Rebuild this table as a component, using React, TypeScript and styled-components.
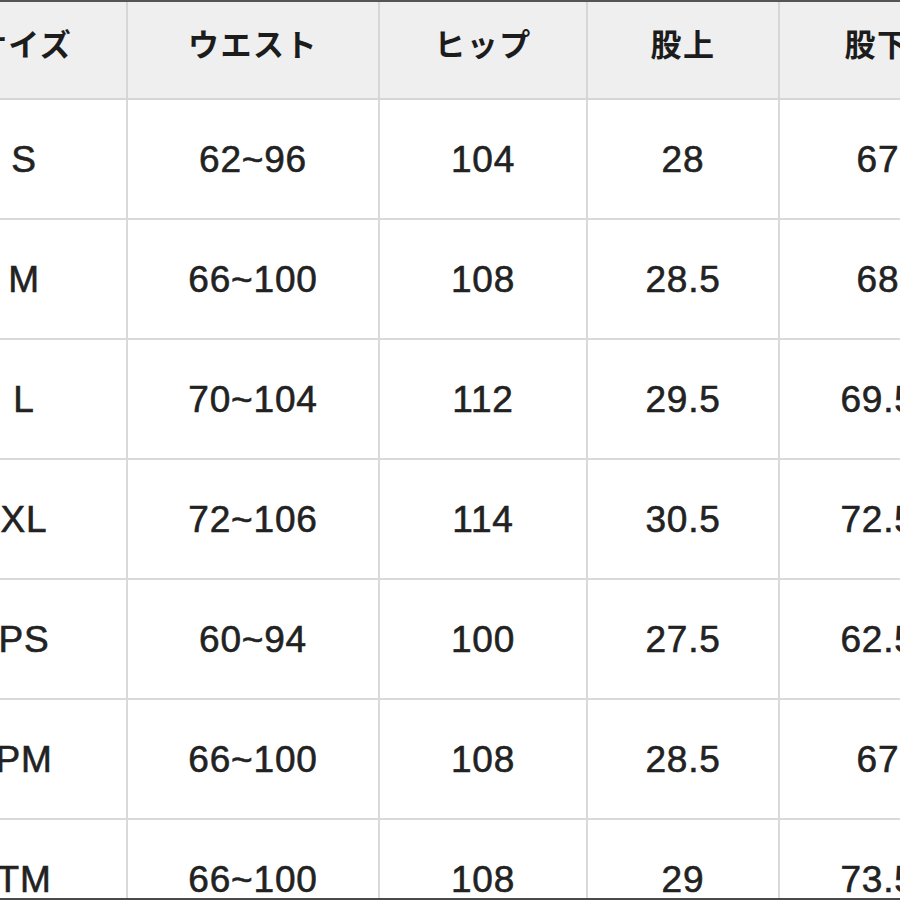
import styled, { createGlobalStyle } from 'styled-components';

const GlobalStyle = createGlobalStyle`
  html, body {
    margin: 0;
    padding: 0;
    background: #ffffff;
    overflow: hidden;
  }
  body {
    width: 900px;
    height: 900px;
  }
`;

const COLUMNS = [206, 252, 208, 192, 196];

const HEADERS = ['サイズ', 'ウエスト', 'ヒップ', '股上', '股下'];

const ROWS: string[][] = [
  ['S', '62~96', '104', '28', '67'],
  ['M', '66~100', '108', '28.5', '68'],
  ['L', '70~104', '112', '29.5', '69.5'],
  ['XL', '72~106', '114', '30.5', '72.5'],
  ['PS', '60~94', '100', '27.5', '62.5'],
  ['PM', '66~100', '108', '28.5', '67'],
  ['TM', '66~100', '108', '29', '73.5'],
];

const App = () => {
  return (
    <>
      <GlobalStyle />
      <Frame>
        <SizeTable>
          {HEADERS.map((h) => (
            <HeadCell key={h}>{h}</HeadCell>
          ))}
          {ROWS.map((row) =>
            row.map((value, i) => (
              <Cell key={row[0] + i} $last={i === row.length - 1}>
                {value}
              </Cell>
            ))
          )}
        </SizeTable>
      </Frame>
    </>
  );
};

const Frame = styled.div`
  width: 900px;
  height: 900px;
  overflow: hidden;
  position: relative;
  border-top: 2px solid #555555;
  box-sizing: border-box;
  &::after {
    content: '';
    position: absolute;
    left: 0;
    right: 0;
    bottom: 0;
    height: 2px;
    background: #4a4a4a;
  }
`;

const SizeTable = styled.div`
  display: grid;
  grid-template-columns: ${COLUMNS.map((c) => `${c}px`).join(' ')};
  grid-template-rows: 98px repeat(7, 120px);
  margin-left: -78px;
  width: max-content;
`;

const HeadCell = styled.div`
  display: flex;
  align-items: center;
  justify-content: center;
  padding-bottom: 16px;
  box-sizing: border-box;
  background: #efefef;
  border-right: 2px solid #d6d6d6;
  border-bottom: 2px solid #d6d6d6;
  color: #1c1c1c;
  font-family: 'Noto Sans CJK JP', 'Noto Sans', sans-serif;
  font-weight: 700;
  font-size: 31px;
  letter-spacing: 1.5px;
`;

const Cell = styled.div<{ $last?: boolean }>`
  display: flex;
  align-items: center;
  justify-content: center;
  padding-top: 2px;
  box-sizing: border-box;
  background: #ffffff;
  border-right: ${({ $last }) => ($last ? 'none' : '2px solid #d9d9d9')};
  border-bottom: 2px solid #d9d9d9;
  color: #222222;
  font-family: 'Liberation Sans', Arial, sans-serif;
  font-size: 37px;
  letter-spacing: 0.8px;
  -webkit-text-stroke: 0.6px #222222;
`;

export default App;
